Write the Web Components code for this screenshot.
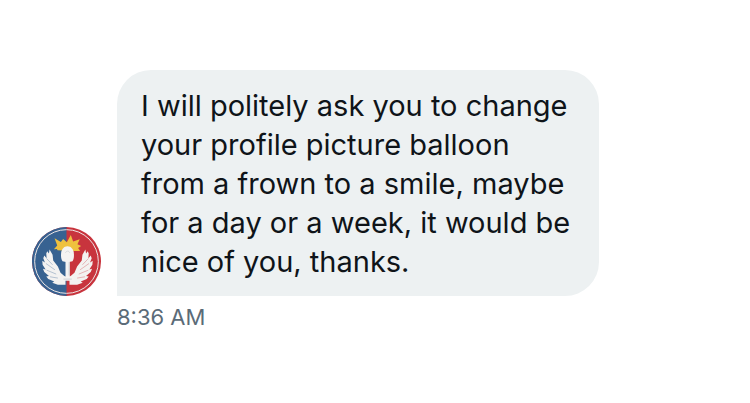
<!DOCTYPE html>
<html lang="en">
<head>
<meta charset="utf-8">
<meta name="viewport" content="width=device-width, initial-scale=1">
<title>Direct message</title>
<style>
  body { margin: 0; background: #fff; font-family: Inter, "Liberation Sans", sans-serif; color: #0f1419; }
</style>
</head>
<body>
<chat-thread>
  <chat-message>
    <user-avatar slot="avatar"></user-avatar>
    <chat-bubble>I will politely ask you to change your profile picture balloon from a frown to a smile, maybe for a day or a week, it would be nice of you, thanks.</chat-bubble>
    <time slot="time" datetime="08:36">8:36 AM</time>
  </chat-message>
</chat-thread>

<template id="thread">
  <style>
    :host { display: block; box-sizing: border-box; padding: 70px 32px 24px; }
  </style>
  <slot></slot>
</template>

<template id="message">
  <style>
    :host { display: grid; grid-template-columns: auto minmax(0, 1fr); column-gap: 16px; row-gap: 6px; align-items: end; }
    .body { display: flex; }
    .time { grid-column: 2; font-size: 22px; line-height: 30px; color: #5b6b78; }
  </style>
  <slot name="avatar"></slot>
  <div class="body"><slot></slot></div>
  <div class="time"><slot name="time"></slot></div>
</template>

<template id="bubble">
  <style>
    :host { display: block; box-sizing: border-box; max-width: 482px; padding: 16px 24px 15px; border-radius: 34px 34px 34px 0; background: #edf1f2; font-size: 29px; line-height: 39px; }
  </style>
  <slot></slot>
</template>

<template id="avatar">
  <style>
    :host { display: block; width: 69px; height: 69px; }
    svg { display: block; width: 100%; height: 100%; }
  </style>
  <svg viewBox="17 14 208 208" role="img" aria-label="Profile picture">
    <circle cx="121" cy="118" r="104" fill="#c8343d"/>
    <path d="M121 14a104 104 0 0 0 0 208z" fill="#376291"/>
    <circle cx="121" cy="118" r="96" fill="none" stroke="#eee6e6" stroke-width="3"/>
    <path d="M94 84L92 80 83 81 93 70 85 48 104 59 111 50 122 60 134 38 141 58 161 51 154 66 165 71 156 77 162 86 143 86z" fill="#efc13e"/>
    <g fill="#f3f2f1">
      <path id="wing" d="M70 82L79 98 81 115 95 133 103 152 118 165V188L95 188 78 182 84 178 66 171 60 163 68 162 54 150 50 140 58 142 49 128 48 116 56 121 51 108 54 100 61 108 60 94 63 87 68 94z"/>
      <path d="M70 82L79 98 81 115 95 133 103 152 118 165V188L95 188 78 182 84 178 66 171 60 163 68 162 54 150 50 140 58 142 49 128 48 116 56 121 51 108 54 100 61 108 60 94 63 87 68 94z" transform="translate(248 0) scale(-1 1)"/>
    </g>
    <path d="M61 109l18 19M59 124l27 19M61 144l29 12M71 164l24 4" fill="none" stroke="#376291" stroke-width="2" opacity=".5"/>
    <path d="M187 109l-18 19M189 124l-27 19M187 144l-29 12M177 164l-24 4" fill="none" stroke="#c8343d" stroke-width="2" opacity=".5"/>
    <path d="M124 72c11 0 17 9 19 19 1 10 1 19-4 26-8 3-22 3-30 0-5-7-5-16-4-26 2-10 8-19 19-19z" fill="#f5f3f2"/>
    <path d="M118 92c2-7 11-7 13 0" fill="none" stroke="#c9cdd2" stroke-width="2"/>
    <path d="M118 117h13v46h12v13h-37v-13h12z" fill="#f5f3f2"/>
    <path d="M129 120v40M112 171h25" fill="none" stroke="#b9c2ca" stroke-width="2"/>
  </svg>
</template>

<script>
  for (const [tag, id] of [
    ["chat-thread", "thread"],
    ["chat-message", "message"],
    ["chat-bubble", "bubble"],
    ["user-avatar", "avatar"]
  ]) {
    customElements.define(tag, class extends HTMLElement {
      constructor() {
        super();
        this.attachShadow({ mode: "open" })
          .append(document.getElementById(id).content.cloneNode(true));
      }
    });
  }
</script>
</body>
</html>
